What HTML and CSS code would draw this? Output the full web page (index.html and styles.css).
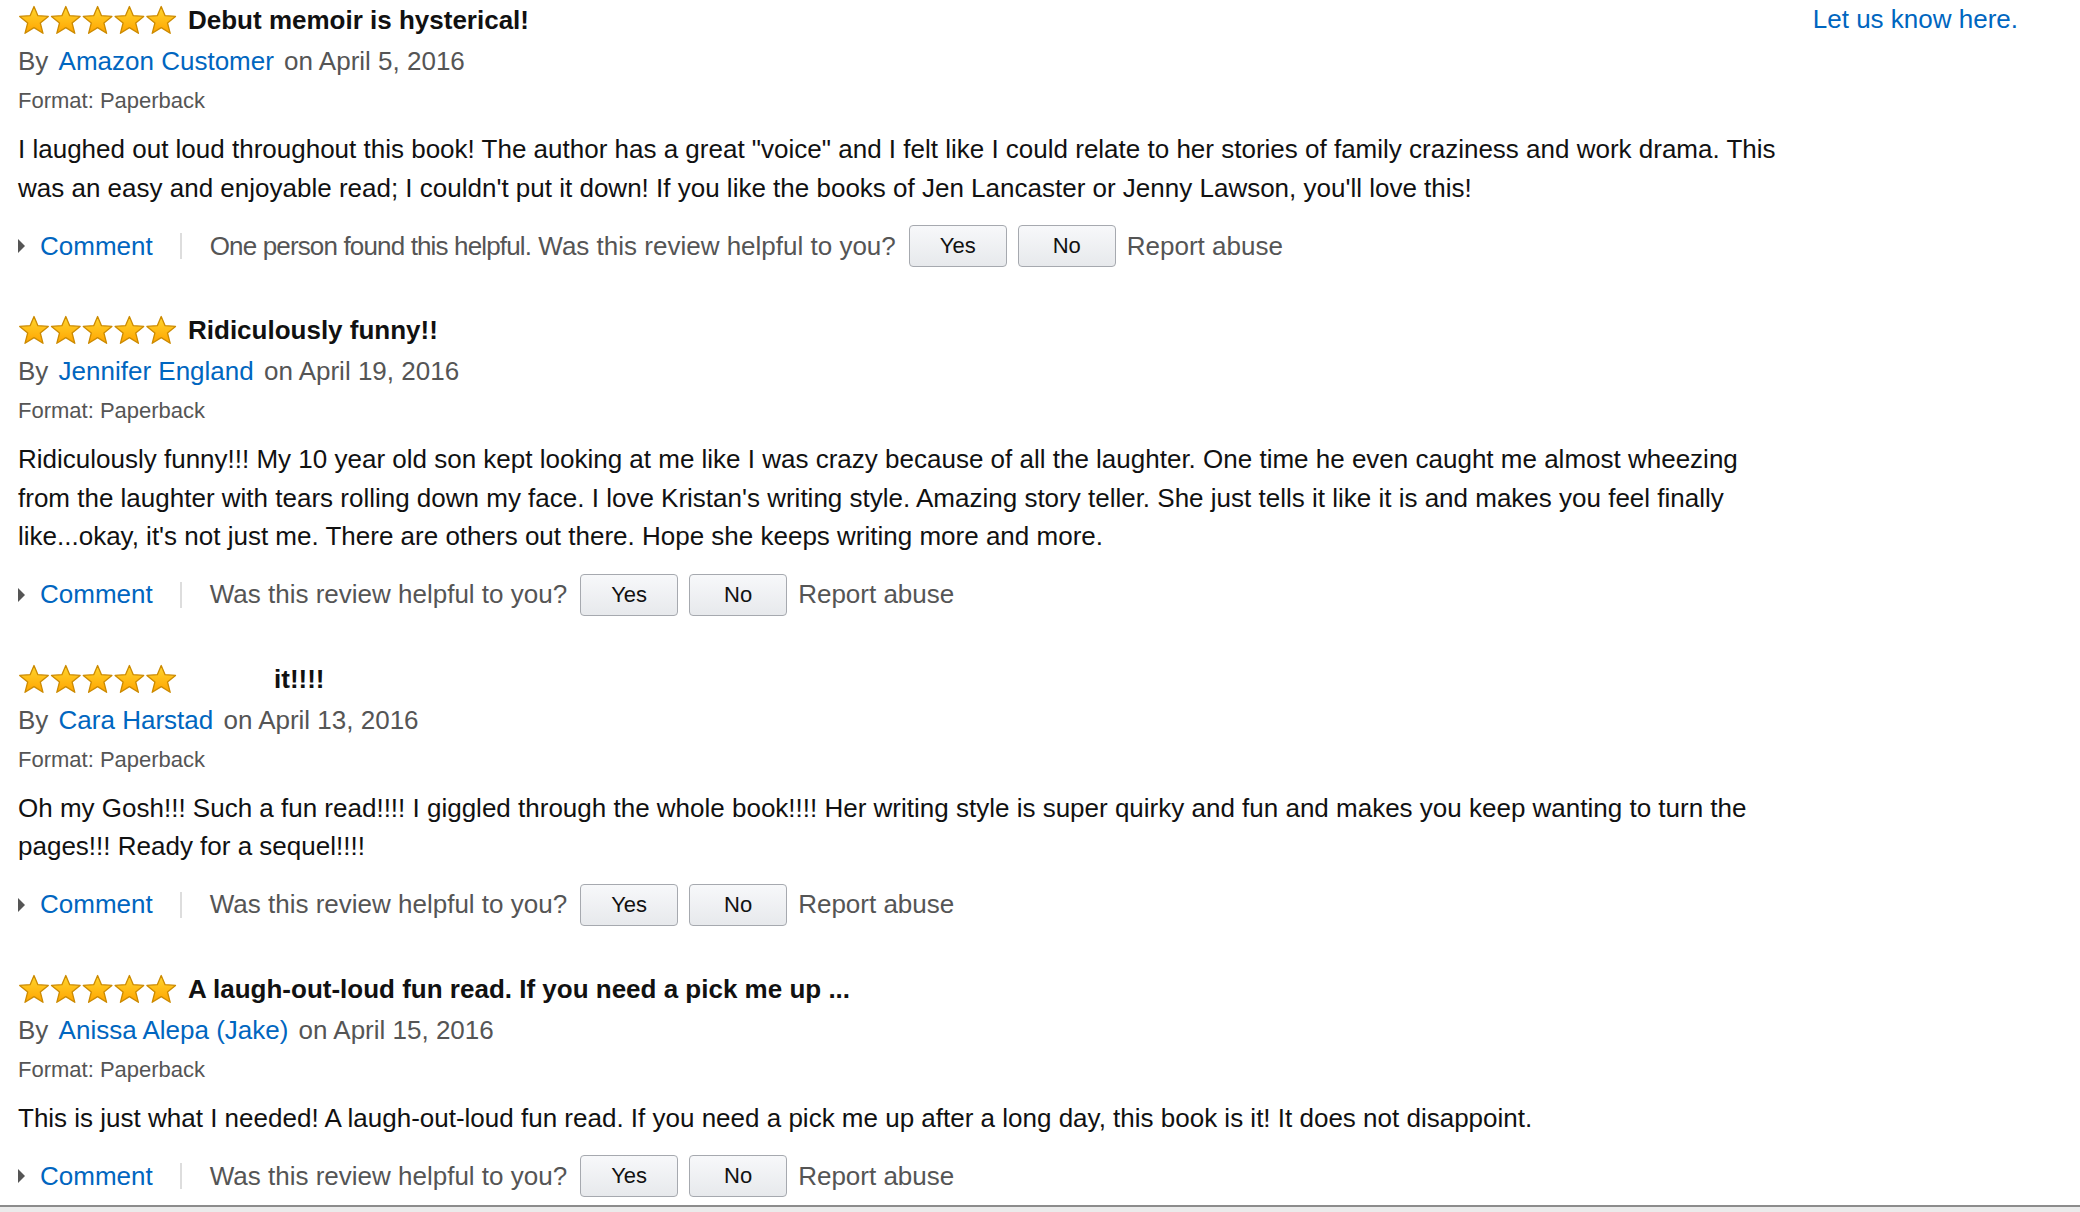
FILE: index.html
```html
<!DOCTYPE html>
<html lang="en">
<head>
<meta charset="utf-8">
<title>Customer Reviews</title>
<link rel="stylesheet" href="styles.css">
</head>
<body>
<svg class="defs" width="0" height="0" aria-hidden="true">
  <defs>
    <linearGradient id="starfill" x1="0" y1="0" x2="0" y2="1">
      <stop offset="0" stop-color="#ffd62e"/>
      <stop offset="1" stop-color="#ffa400"/>
    </linearGradient>
    <path id="star" d="M16 1.5 L19.9 10.7 L30.3 11.4 L22.3 18 L25 28.3 L16 22.6 L7 28.3 L9.7 18 L1.7 11.4 L12.1 10.7 Z" fill="url(#starfill)" stroke="#cc8a00" stroke-width="1.3" stroke-linejoin="round"/>
  </defs>
</svg>
<div class="page">
  <div class="content">
    <main class="reviews">
      <section class="review">
        <div class="title-row">
          <svg class="stars" width="160" height="30" viewBox="0 0 160 30"><use href="#star" x="0"/><use href="#star" x="31.8"/><use href="#star" x="63.6"/><use href="#star" x="95.4"/><use href="#star" x="127.2"/></svg>
          <span class="title">Debut memoir is hysterical!</span>
        </div>
        <div class="byline">By <a class="author" href="#">Amazon Customer</a> on April 5, 2016</div>
        <div class="format">Format: Paperback</div>
        <p class="body">I laughed out loud throughout this book! The author has a great "voice" and I felt like I could relate to her stories of family craziness and work drama. This was an easy and enjoyable read; I couldn't put it down! If you like the books of Jen Lancaster or Jenny Lawson, you'll love this!</p>
        <div class="actions">
          <span class="caret"></span>
          <a class="comment" href="#">Comment</a>
          <span class="sep"></span>
          <span class="helpful"><span class="count">One person found this helpful.</span> Was this review helpful to you?</span>
          <button class="btn">Yes</button>
          <button class="btn">No</button>
          <span class="report">Report abuse</span>
        </div>
      </section>

      <section class="review">
        <div class="title-row">
          <svg class="stars" width="160" height="30" viewBox="0 0 160 30"><use href="#star" x="0"/><use href="#star" x="31.8"/><use href="#star" x="63.6"/><use href="#star" x="95.4"/><use href="#star" x="127.2"/></svg>
          <span class="title">Ridiculously funny!!</span>
        </div>
        <div class="byline">By <a class="author" href="#">Jennifer England</a> on April 19, 2016</div>
        <div class="format">Format: Paperback</div>
        <p class="body">Ridiculously funny!!! My 10 year old son kept looking at me like I was crazy because of all the laughter. One time he even caught me almost wheezing from the laughter with tears rolling down my face. I love Kristan's writing style. Amazing story teller. She just tells it like it is and makes you feel finally like...okay, it's not just me. There are others out there. Hope she keeps writing more and more.</p>
        <div class="actions">
          <span class="caret"></span>
          <a class="comment" href="#">Comment</a>
          <span class="sep"></span>
          <span class="helpful">Was this review helpful to you?</span>
          <button class="btn">Yes</button>
          <button class="btn">No</button>
          <span class="report">Report abuse</span>
        </div>
      </section>

      <section class="review">
        <div class="title-row">
          <svg class="stars" width="160" height="30" viewBox="0 0 160 30"><use href="#star" x="0"/><use href="#star" x="31.8"/><use href="#star" x="63.6"/><use href="#star" x="95.4"/><use href="#star" x="127.2"/></svg>
          <span class="title"><span class="blank-glyphs"></span>it!!!!</span>
        </div>
        <div class="byline">By <a class="author" href="#">Cara Harstad</a> on April 13, 2016</div>
        <div class="format">Format: Paperback</div>
        <p class="body">Oh my Gosh!!! Such a fun read!!!! I giggled through the whole book!!!! Her writing style is super quirky and fun and makes you keep wanting to turn the pages!!! Ready for a sequel!!!!</p>
        <div class="actions">
          <span class="caret"></span>
          <a class="comment" href="#">Comment</a>
          <span class="sep"></span>
          <span class="helpful">Was this review helpful to you?</span>
          <button class="btn">Yes</button>
          <button class="btn">No</button>
          <span class="report">Report abuse</span>
        </div>
      </section>

      <section class="review">
        <div class="title-row">
          <svg class="stars" width="160" height="30" viewBox="0 0 160 30"><use href="#star" x="0"/><use href="#star" x="31.8"/><use href="#star" x="63.6"/><use href="#star" x="95.4"/><use href="#star" x="127.2"/></svg>
          <span class="title">A laugh-out-loud fun read. If you need a pick me up ...</span>
        </div>
        <div class="byline">By <a class="author" href="#">Anissa Alepa (Jake)</a> on April 15, 2016</div>
        <div class="format">Format: Paperback</div>
        <p class="body">This is just what I needed! A laugh-out-loud fun read. If you need a pick me up after a long day, this book is it! It does not disappoint.</p>
        <div class="actions">
          <span class="caret"></span>
          <a class="comment" href="#">Comment</a>
          <span class="sep"></span>
          <span class="helpful">Was this review helpful to you?</span>
          <button class="btn">Yes</button>
          <button class="btn">No</button>
          <span class="report">Report abuse</span>
        </div>
      </section>
    </main>
    <aside class="aside">
      <a class="letus" href="#">Let us know here.</a>
    </aside>
  </div>
  <footer class="footer"></footer>
</div>
</body>
</html>
```

FILE: styles.css
```css
html, body {
  margin: 0;
  padding: 0;
  height: 100%;
  background: #fff;
  overflow: hidden;
}

body {
  font-family: "Liberation Sans", Arial, Helvetica, sans-serif;
  color: #111;
}

.defs {
  position: absolute;
  width: 0;
  height: 0;
}

.page {
  height: 1212px;
  display: flex;
  flex-direction: column;
}

.content {
  flex: 1;
  display: flex;
  min-height: 0;
}

.reviews {
  width: 1768px;
  padding: 1px 0 0 18px;
}

.aside {
  flex: 1;
  text-align: right;
  padding-right: 62px;
}

.letus {
  font-size: 26px;
  line-height: 38px;
  color: #0066c0;
  text-decoration: none;
}

.review {
  margin-bottom: 44px;
}

.title-row {
  display: flex;
  align-items: center;
  height: 38px;
}

.stars {
  display: block;
  margin-right: 10px;
  flex: none;
}

.title {
  font-size: 26px;
  font-weight: bold;
  line-height: 38px;
  color: #111;
  white-space: nowrap;
}

.blank-glyphs {
  display: inline-block;
  width: 86px;
}

.byline {
  margin-top: 3px;
  font-size: 26px;
  line-height: 38px;
  color: #555;
}

.author {
  color: #0066c0;
  text-decoration: none;
  margin: 0 3px;
}

.format {
  margin-top: 5px;
  font-size: 22px;
  line-height: 32px;
  color: #555;
}

.body {
  margin: 13px 0 0 0;
  font-size: 26px;
  line-height: 38.5px;
  color: #111;
}

.actions {
  margin-top: 18px;
  height: 42px;
  display: flex;
  align-items: center;
  font-size: 26px;
  color: #555;
  white-space: nowrap;
}

.caret {
  width: 0;
  height: 0;
  border-left: 7px solid #555;
  border-top: 7px solid transparent;
  border-bottom: 7px solid transparent;
  margin-right: 15px;
}

.comment {
  color: #0066c0;
  text-decoration: none;
}

.sep {
  width: 2px;
  height: 26px;
  background: #dddddd;
  margin: 0 28px 0 27px;
}

.helpful {
  margin-right: 13px;
}

.count {
  letter-spacing: -0.85px;
}

.btn {
  box-sizing: border-box;
  width: 98px;
  height: 42px;
  margin: 0 11px 0 0;
  padding: 0;
  border: 1px solid #a6a9af;
  border-radius: 4px;
  background: linear-gradient(#f7f8fa, #e7e9ec);
  font-family: "Liberation Sans", Arial, Helvetica, sans-serif;
  font-size: 22px;
  color: #111;
}

.report {
  color: #555;
}

.footer {
  flex: none;
  height: 5px;
  border-top: 2px solid #8c8c8c;
  background: #ebebeb;
}
```
